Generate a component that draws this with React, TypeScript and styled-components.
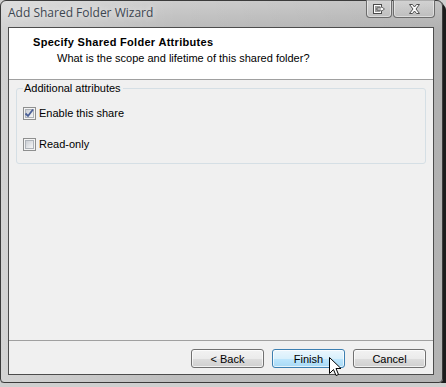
import styled, { createGlobalStyle } from 'styled-components'

const GlobalStyle = createGlobalStyle`
  html, body {
    margin: 0;
    padding: 0;
    background: #cfcfcf;
  }
  body {
    font-family: "Liberation Sans", Arial, sans-serif;
    font-size: 11px;
    color: #000;
  }
`

const Window = styled.div`
  position: relative;
  box-sizing: border-box;
  width: 443px;
  height: 383px;
  padding: 0 8px 7px 7px;
  display: flex;
  flex-direction: column;
  border: 1px solid #3b3b3b;
  border-radius: 6px 6px 4px 4px;
  background:
    linear-gradient(90deg, rgba(255,255,255,0.35), rgba(255,255,255,0) 40%, rgba(0,0,0,0.05)),
    linear-gradient(180deg, #cdcdcd, #b9b9b9 30px, #bdbdbd);
  box-shadow: 3px 4px 0 #1c1c1c, 1px 1px 0 #2a2a2a;
`

const TitleBar = styled.div`
  height: 26px;
  display: flex;
  align-items: flex-start;
  justify-content: space-between;
`

const Title = styled.div`
  margin-top: 4px;
  font-family: "Open Sans", "Liberation Sans", sans-serif;
  font-size: 12px;
  line-height: 16px;
  color: #3d4650;
  text-shadow: 0 0 6px rgba(255,255,255,0.9);
`

const Controls = styled.div`
  display: flex;
  gap: 1px;
  margin-right: -1px;
  margin-top: -1px;
`

const CaptionButton = styled.div<{ $wide?: boolean }>`
  box-sizing: border-box;
  width: ${p => (p.$wide ? '42px' : '26px')};
  height: 18px;
  display: flex;
  align-items: center;
  justify-content: center;
  border: 1px solid #6c6c6c;
  border-top: none;
  border-radius: 0 0 4px 4px;
  background: linear-gradient(180deg, rgba(255,255,255,0.25), rgba(255,255,255,0.05));
  box-shadow: inset 0 0 0 1px rgba(255,255,255,0.45);
`

const Client = styled.div`
  flex: 1;
  display: flex;
  flex-direction: column;
  border: 1px solid #4c4c4c;
  background: #f0f0f0;
`

const Header = styled.div`
  height: 52px;
  box-sizing: border-box;
  padding: 6px 0 0 24px;
  background: #fff;
  border-bottom: 1px solid #a0a0a0;
`

const HeaderTitle = styled.div`
  font-weight: bold;
  letter-spacing: 0.3px;
  line-height: 16px;
`

const HeaderSubtitle = styled.div`
  padding-left: 24px;
  line-height: 16px;
`

const Body = styled.div`
  flex: 1;
  padding: 2px 7px 0 7px;
  border-bottom: 1px solid #a0a0a0;
`

const GroupBox = styled.fieldset`
  margin: 0;
  height: 82px;
  box-sizing: border-box;
  padding: 12px 6px 0 6px;
  border: 1px solid #d5dfe5;
  border-radius: 3px;
  display: flex;
  flex-direction: column;
  gap: 18px;
`

const Legend = styled.legend`
  padding: 0 2px 0 1px;
  line-height: 13px;
`

const CheckRow = styled.label`
  display: flex;
  align-items: center;
  gap: 3px;
  line-height: 13px;
`

const Box = styled.span`
  box-sizing: border-box;
  width: 13px;
  height: 13px;
  border: 1px solid #8e8f8f;
  background: #f4f4f4;
  display: flex;
  align-items: center;
  justify-content: center;
`

const BoxInner = styled.span`
  box-sizing: border-box;
  width: 9px;
  height: 9px;
  border: 1px solid #aeb3b9;
  background: linear-gradient(135deg, #cbcfd5, #f6f6f6);
  display: flex;
  align-items: center;
  justify-content: center;
  overflow: visible;
`

const Footer = styled.div`
  height: 33px;
  box-sizing: border-box;
  padding: 8px 7px 6px 0;
  display: flex;
  justify-content: flex-end;
  gap: 8px;
`

const Button = styled.button<{ $active?: boolean }>`
  box-sizing: border-box;
  width: 73px;
  height: 19px;
  padding: 0;
  font-family: "Liberation Sans", Arial, sans-serif;
  font-size: 11px;
  color: #000;
  border-radius: 3px;
  border: 1px solid ${p => (p.$active ? '#3c7fb1' : '#707070')};
  background: ${p =>
    p.$active
      ? 'linear-gradient(180deg, #eaf6fd 0%, #d9f0fc 50%, #bee6fd 51%, #a7d9f5 100%)'
      : 'linear-gradient(180deg, #f2f2f2 0%, #ebebeb 50%, #dddddd 51%, #cfcfcf 100%)'};
  box-shadow: inset 0 0 0 1px rgba(255,255,255,0.7);
`

const Cursor = styled.svg`
  position: absolute;
  left: 328px;
  top: 356px;
`

const Check = ({ checked, label }: { checked?: boolean; label: string }) => (
  <CheckRow>
    <Box>
      <BoxInner>
        {checked && (
          <svg width="9" height="9" viewBox="0 0 9 9" style={{ overflow: 'visible' }}>
            <path d="M0.5 4.5 L3 7 L8 0.5" fill="none" stroke="#4a5f97" strokeWidth="1.8" />
          </svg>
        )}
      </BoxInner>
    </Box>
    {label}
  </CheckRow>
)

export default function App() {
  return (
    <>
      <GlobalStyle />
      <Window>
        <TitleBar>
          <Title>Add Shared Folder Wizard</Title>
          <Controls>
            <CaptionButton>
              <svg width="12" height="10" viewBox="0 0 12 10">
                <rect x="0.5" y="0.5" width="8" height="9" fill="#fff" stroke="#4a4a4a" />
                <rect x="2" y="2" width="5" height="6" fill="#9a9a9a" />
                <path d="M4 4 H8 V2.5 L11.5 5 L8 7.5 V6 H4 Z" fill="#fff" stroke="#4a4a4a" strokeWidth="0.8" />
              </svg>
            </CaptionButton>
            <CaptionButton $wide>
              <svg width="11" height="10" viewBox="0 0 11 10">
                <path
                  d="M0.5 0.5 H3.5 L5.5 3 L7.5 0.5 H10.5 L7 5 L10.5 9.5 H7.5 L5.5 7 L3.5 9.5 H0.5 L4 5 Z"
                  fill="#fff"
                  stroke="#4e4e4e"
                  strokeWidth="1"
                />
              </svg>
            </CaptionButton>
          </Controls>
        </TitleBar>
        <Client>
          <Header>
            <HeaderTitle>Specify Shared Folder Attributes</HeaderTitle>
            <HeaderSubtitle>What is the scope and lifetime of this shared folder?</HeaderSubtitle>
          </Header>
          <Body>
            <GroupBox>
              <Legend>Additional attributes</Legend>
              <Check checked label="Enable this share" />
              <Check label="Read-only" />
            </GroupBox>
          </Body>
          <Footer>
            <Button>&lt; Back</Button>
            <Button $active>Finish</Button>
            <Button>Cancel</Button>
          </Footer>
        </Client>
        <Cursor width="13" height="21" viewBox="0 0 13 21">
          <path
            d="M0.5 0.5 V16.5 L4.5 12.5 L7 18.5 L9.5 17.5 L7 11.5 H12 Z"
            fill="#fff"
            stroke="#000"
            strokeWidth="1"
            strokeLinejoin="round"
          />
        </Cursor>
      </Window>
    </>
  )
}
